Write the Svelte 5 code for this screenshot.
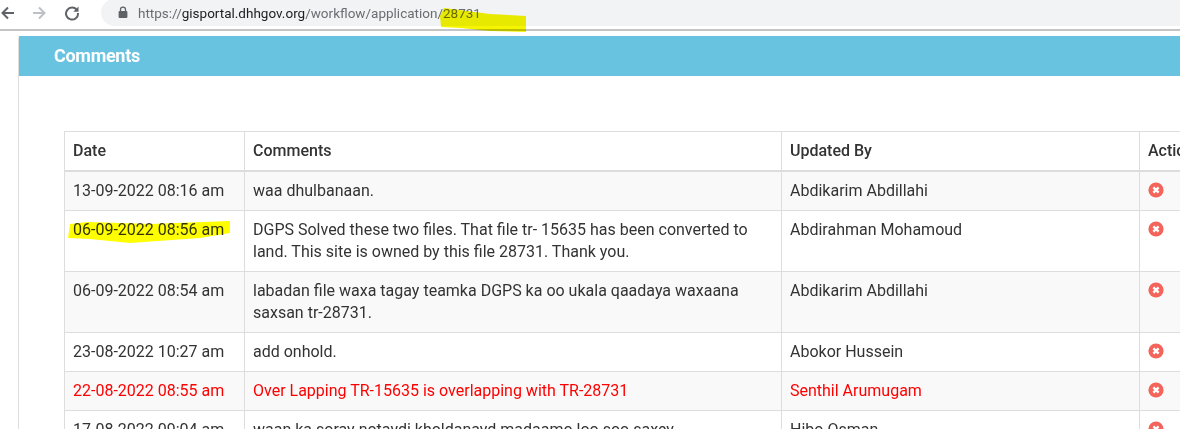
<script>
  const rows = [
    { date: '13-09-2022 08:16 am', text: ['waa dhulbanaan.'], by: 'Abdikarim Abdillahi' },
    { date: '06-09-2022 08:56 am', text: ['DGPS Solved these two files. That file tr- 15635 has been converted to', 'land. This site is owned by this file 28731. Thank you.'], by: 'Abdirahman Mohamoud' },
    { date: '06-09-2022 08:54 am', text: ['labadan file waxa tagay teamka DGPS ka oo ukala qaadaya waxaana', 'saxsan tr-28731.'], by: 'Abdikarim Abdillahi' },
    { date: '23-08-2022 10:27 am', text: ['add onhold.'], by: 'Abokor Hussein' },
    { date: '22-08-2022 08:55 am', text: ['Over Lapping TR-15635 is overlapping with TR-28731'], by: 'Senthil Arumugam', red: true },
    { date: '17-08-2022 09:04 am', text: ['waan ka soray notaydi kholdanayd madaamo loo soo saxey'], by: 'Hibo Osman' }
  ];
</script>

<div class="page">
  <header class="chrome">
    <svg class="nav back" viewBox="0 0 16 16" width="16" height="16"><path d="M14 8H3M8 2.5 2.5 8 8 13.5" fill="none" stroke="#5f6368" stroke-width="2"/></svg>
    <svg class="nav fwd" viewBox="0 0 16 16" width="16" height="16"><path d="M2 8h11M8 2.5 13.5 8 8 13.5" fill="none" stroke="#bdc1c6" stroke-width="2"/></svg>
    <svg class="nav reload" viewBox="0 0 16 16" width="16" height="16"><path d="M13 5.2A6 6 0 1 0 14 8" fill="none" stroke="#5f6368" stroke-width="2"/><path d="M14.5 1.5v5.2H9.3z" fill="#5f6368"/></svg>
    <div class="omnibox">
      <svg class="lock" viewBox="0 0 10 13" width="10" height="13"><path d="M2.5 5V3.6a2.5 2.5 0 0 1 5 0V5" fill="none" stroke="#5f6368" stroke-width="1.3"/><rect x="0.6" y="5" width="8.8" height="7" rx="1" fill="#5f6368"/></svg>
      <span class="url">https://<b>gisportal.dhhgov.org</b>/workflow/application/28731</span>
    </div>
  </header>

  <main class="content">
    <section class="panel">
      <h2 class="heading">Comments</h2>
      <div class="body">
        <table>
          <colgroup>
            <col class="c1" /><col class="c2" /><col class="c3" /><col class="c4" />
          </colgroup>
          <thead>
            <tr><th>Date</th><th>Comments</th><th>Updated By</th><th>Action</th></tr>
          </thead>
          <tbody>
            {#each rows as row}
              <tr class:red={row.red}>
                <td>{row.date}</td>
                <td>{#each row.text as line, i}{#if i}<br />{/if}{line}{/each}</td>
                <td>{row.by}</td>
                <td>
                  <svg class="remove" viewBox="0 0 16 16" width="16" height="16"><circle cx="8" cy="8" r="7.6" fill="#f4645a"/><path d="M5.4 5.4l5.2 5.2M10.6 5.4l-5.2 5.2" stroke="#fff" stroke-width="2.4"/></svg>
                </td>
              </tr>
            {/each}
          </tbody>
        </table>
      </div>
    </section>
  </main>

  <svg class="marker" width="1180" height="429" viewBox="0 0 1180 429">
    <path d="M440 16 L444 8 L490 14 L526 16 L526 32 L490 31 L460 28 L441 27Z" fill="#f5f500"/>
    <path d="M70 224 L88 222 L150 224 L230 221 L230 233 L200 238 L130 243 L90 239 L68 238Z" fill="#ffff00"/>
  </svg>
</div>

<style>
  :global(body) { margin: 0; background: #fff; }
  .page {
    position: relative;
    width: 1180px;
    height: 429px;
    overflow: hidden;
    font-family: Roboto, "Liberation Sans", sans-serif;
    color: #333;
  }
  .chrome {
    display: flex;
    align-items: center;
    height: 31px;
    box-sizing: border-box;
    border-bottom: 2px solid #c4c4c4;
    padding: 0 0 4px 0;
    background: #fff;
  }
  .nav { flex: none; }
  .back { margin-left: 0; }
  .fwd { margin-left: 15px; }
  .reload { margin-left: 17px; }
  .omnibox {
    flex: 1;
    display: flex;
    align-items: center;
    height: 27px;
    margin-left: 21px;
    padding-left: 17px;
    border-radius: 14px 0 0 14px;
    background: #f1f3f4;
  }
  .lock { flex: none; }
  .url {
    margin-left: 10px;
    font-size: 13.5px;
    color: #6a6e73;
    white-space: nowrap;
  }
  .url b { font-weight: 400; color: #202124; }
  .content {
    padding: 5px 0 0 17px;
    border-left: 1px solid transparent;
    margin-left: 0;
  }
  .panel {
    width: 1300px;
    border-left: 1px solid #ddd;
    border-radius: 3px 0 0 0;
  }
  .heading {
    margin: 0;
    height: 40px;
    padding-left: 35px;
    background: #67c3df;
    color: #fff;
    font-size: 18px;
    font-weight: 700;
    line-height: 40px;
    letter-spacing: -0.3px;
  }
  .body { padding: 55px 0 0 45px; }
  table {
    width: 1180px;
    table-layout: fixed;
    border-collapse: collapse;
    font-size: 16px;
    line-height: 22px;
  }
  .c1 { width: 180px; }
  .c2 { width: 537px; }
  .c3 { width: 358px; }
  .c4 { width: 105px; }
  th, td {
    border: 1px solid #ddd;
    padding: 8px;
    text-align: left;
    vertical-align: top;
    white-space: nowrap;
    overflow: hidden;
  }
  th { font-weight: 500; border-bottom-width: 2px; }
  tbody tr:nth-child(odd) { background: #f9f9f9; }
  tr.red td { color: #f00; }
  .remove { display: block; margin-top: 2px; }
  .marker {
    position: absolute;
    left: 0;
    top: 0;
    mix-blend-mode: multiply;
    pointer-events: none;
  }
</style>
